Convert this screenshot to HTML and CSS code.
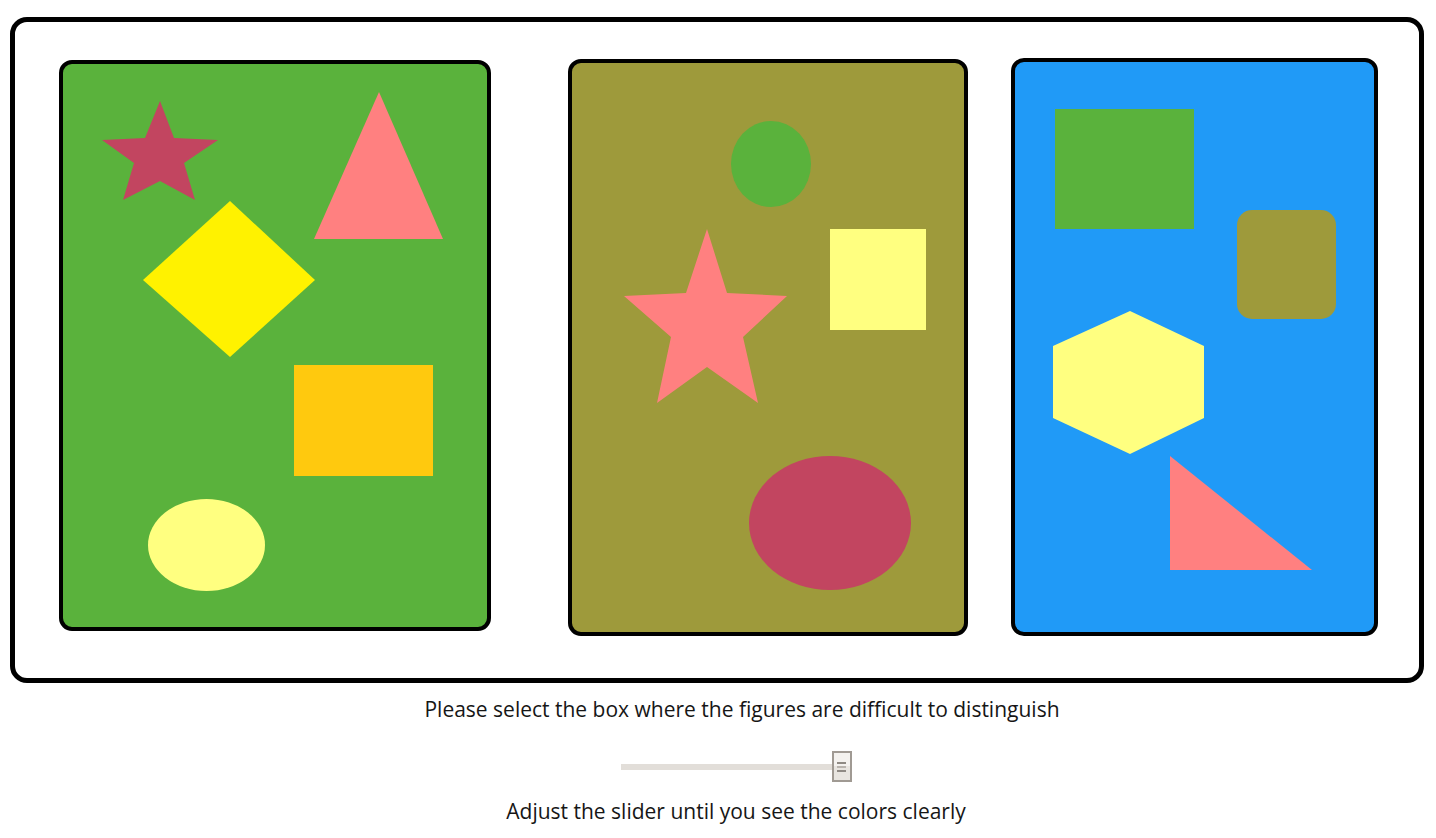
FILE: index.html
```html
<!DOCTYPE html>
<html lang="en">
<head>
<meta charset="utf-8">
<title>Color test</title>
<link rel="stylesheet" href="styles.css">
</head>
<body>
<main class="test">
  <section class="board">
    <div class="panel panel-green">
      <svg class="art" viewBox="63 64 424 563" preserveAspectRatio="none">
        <polygon class="c-crimson" points="160,101 174,138 218,140 184,163 195,200 160,181 123,200 134,163 102,140 145,138"/>
        <polygon class="c-pink" points="379,92 443,239 314,239"/>
        <polygon class="c-yellow" points="230,201 315,280 230,357 143,280"/>
        <rect class="c-orange" x="294" y="365" width="139" height="111"/>
        <ellipse class="c-cream" cx="206.5" cy="545" rx="58.5" ry="46"/>
      </svg>
    </div>
    <div class="panel panel-olive">
      <svg class="art" viewBox="572 63 392 569" preserveAspectRatio="none">
        <ellipse class="c-green" cx="771" cy="164" rx="40" ry="43"/>
        <rect class="c-cream" x="830" y="229" width="96" height="101"/>
        <polygon class="c-pink" points="707,229 727,293 787,296 743,337 758,403 707,367 657,403 671,337 624,296 686,293"/>
        <ellipse class="c-crimson" cx="830" cy="523" rx="81" ry="67"/>
      </svg>
    </div>
    <div class="panel panel-blue">
      <svg class="art" viewBox="1015 62 359 570" preserveAspectRatio="none">
        <rect class="c-green" x="1055" y="109" width="139" height="120"/>
        <rect class="c-olive" x="1237" y="210" width="99" height="109" rx="15" ry="15"/>
        <polygon class="c-cream" points="1130,311 1204,346 1204,418 1130,454 1053,418 1053,346"/>
        <polygon class="c-pink" points="1170,456 1312,570 1170,570"/>
      </svg>
    </div>
  </section>
  <footer class="controls">
    <p class="prompt">Please select the box where the figures are difficult to distinguish</p>
    <input class="slider" type="range" min="0" max="100" value="100" aria-label="Color adjustment">
    <p class="hint">Adjust the slider until you see the colors clearly</p>
  </footer>
</main>
</body>
</html>
```
FILE: styles.css
```css
html, body {
  margin: 0;
  padding: 0;
  background: #ffffff;
}

body {
  font-family: "Open Sans", "Liberation Sans", sans-serif;
  color: #161616;
  width: 1436px;
  height: 838px;
  overflow: hidden;
}

.test {
  padding-top: 17px;
  padding-left: 10px;
}

.board {
  box-sizing: border-box;
  width: 1414px;
  height: 666px;
  border: 5px solid #000;
  border-radius: 17px;
  display: flex;
  align-items: flex-start;
  padding: 36px 0 0 44px;
}

.panel {
  box-sizing: border-box;
  border: 4px solid #000;
  border-radius: 13px;
  overflow: hidden;
  display: flex;
}

.art {
  display: block;
  width: 100%;
  height: 100%;
}

.panel-green {
  width: 432px;
  height: 571px;
  margin-top: 2px;
  background: #5ab23c;
}

.panel-olive {
  width: 400px;
  height: 577px;
  margin-top: 1px;
  margin-left: 77px;
  background: #9e9a3b;
}

.panel-blue {
  width: 367px;
  height: 578px;
  margin-left: 43px;
  background: #209af7;
}

.c-crimson { fill: #c24560; }
.c-pink { fill: #ff8080; }
.c-yellow { fill: #fff200; }
.c-orange { fill: #ffc90e; }
.c-cream { fill: #ffff80; }
.c-green { fill: #5ab23c; }
.c-olive { fill: #9e9a3b; }

.controls {
  display: flex;
  flex-direction: column;
  align-items: center;
  width: 1436px;
  margin-left: -10px;
  padding-left: 36px;
  box-sizing: border-box;
}

.prompt {
  margin: 11px 0 0 12px;
  font-size: 21px;
  line-height: 30px;
}

.slider {
  -webkit-appearance: none;
  appearance: none;
  width: 231px;
  height: 31px;
  margin: 27px 0 0 0;
  padding: 0;
  background: transparent;
}

.slider::-webkit-slider-runnable-track {
  height: 6px;
  background: #e2ded9;
  border: none;
}

.slider::-webkit-slider-thumb {
  -webkit-appearance: none;
  appearance: none;
  box-sizing: border-box;
  width: 20px;
  height: 31px;
  margin-top: -12.5px;
  border: 2px solid #a09a93;
  background:
    linear-gradient(#8f8a84, #8f8a84) center 9px / 9px 2px no-repeat,
    linear-gradient(#b9b4ae, #b9b4ae) center 13px / 9px 2px no-repeat,
    linear-gradient(#8f8a84, #8f8a84) center 17px / 9px 2px no-repeat,
    linear-gradient(#f4f2ef 0 50%, #e8e5e0 50% 100%);
}

.hint {
  margin: 14px 0 0 0;
  font-size: 21px;
  line-height: 30px;
}
```
